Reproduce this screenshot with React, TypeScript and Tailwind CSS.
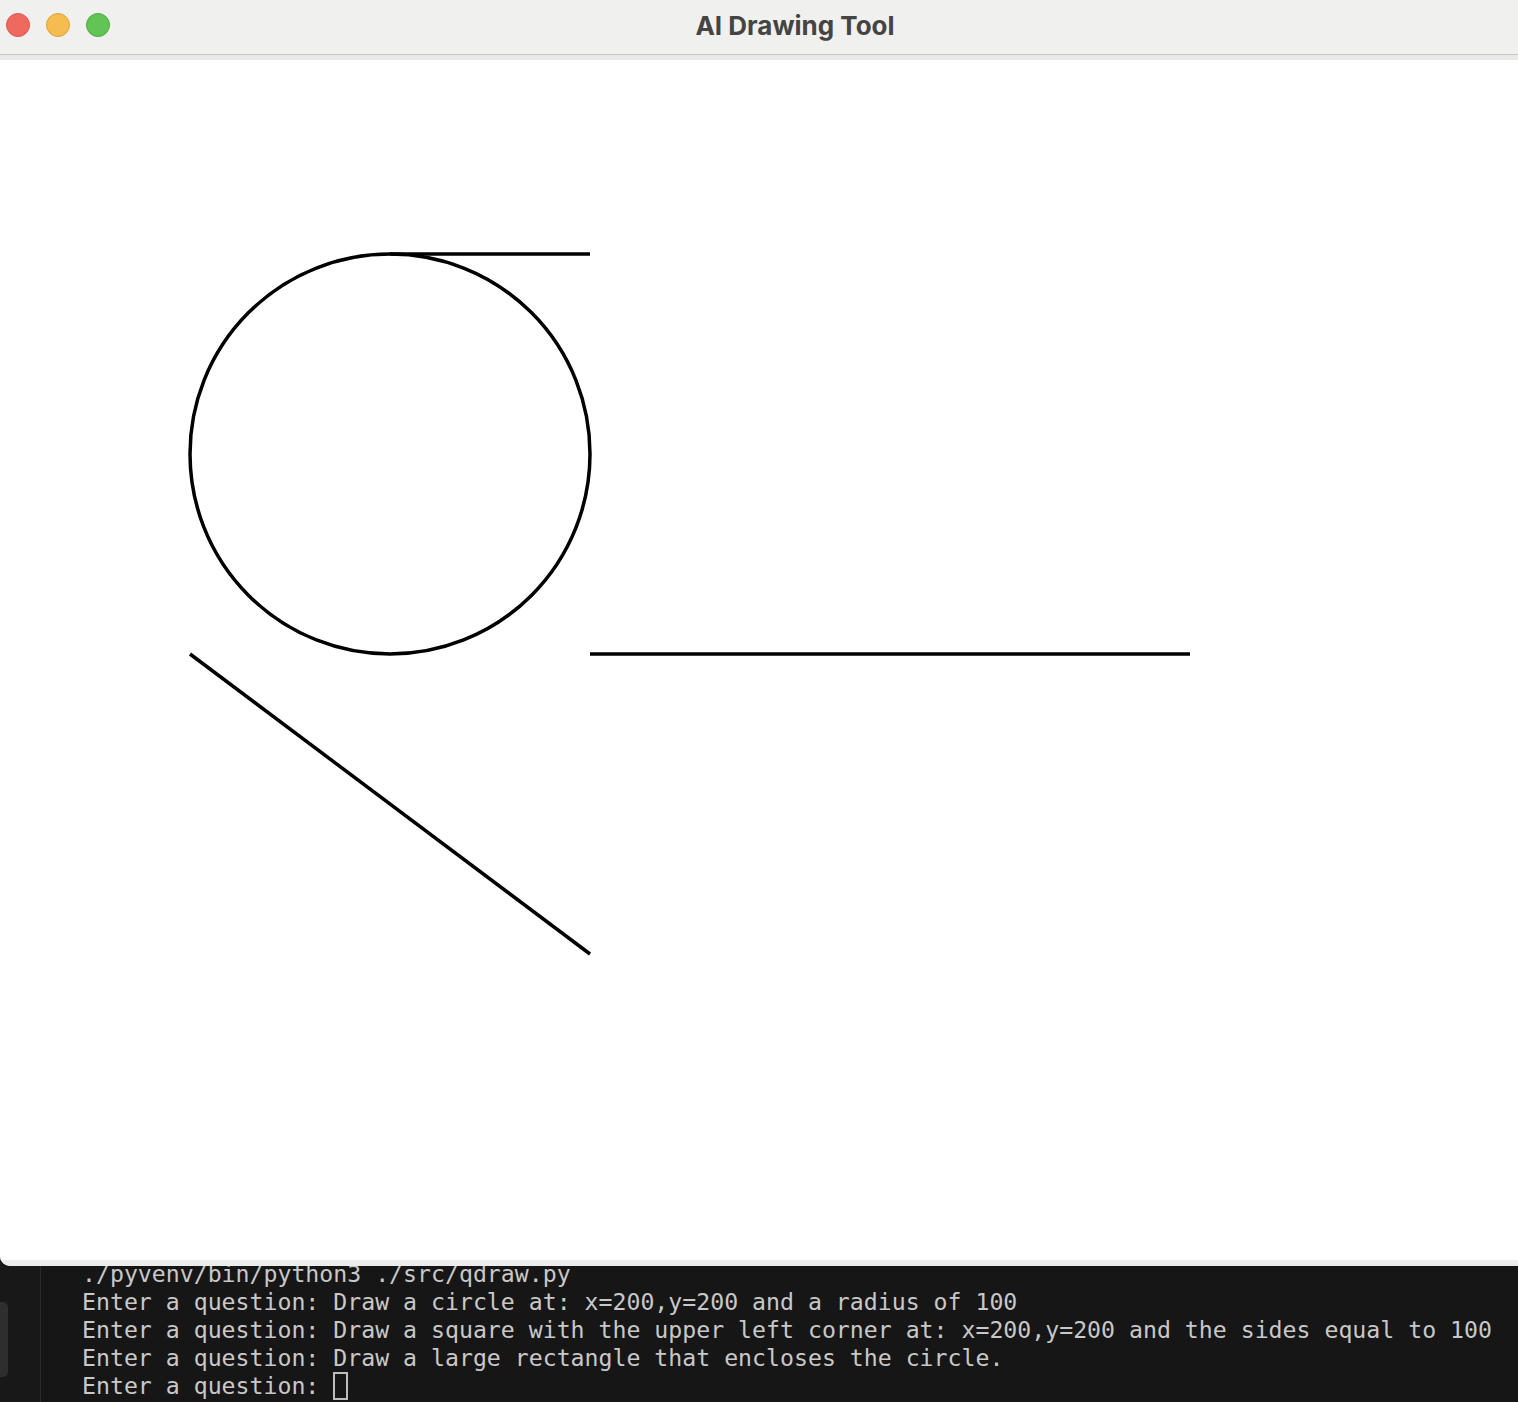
export default function App() {
  const lines = [
    './pyvenv/bin/python3 ./src/qdraw.py',
    'Enter a question: Draw a circle at: x=200,y=200 and a radius of 100',
    'Enter a question: Draw a square with the upper left corner at: x=200,y=200 and the sides equal to 100',
    'Enter a question: Draw a large rectangle that encloses the circle.',
  ];

  return (
    <div className="flex h-[1402px] w-[1518px] flex-col overflow-hidden bg-[#161616]">
      {/* drawing window */}
      <div className="flex flex-col overflow-hidden rounded-bl-[10px] bg-[#ececec]">
        <div className="relative flex h-[55px] items-center border-b border-[#c6c6c6] bg-[#f0f0ef] pb-[4px]">
          <div className="absolute left-[6px] top-[13px] flex gap-[16px]">
            <span className="h-[24px] w-[24px] rounded-full border border-[#d9574c] bg-[#ee6a5f]" />
            <span className="h-[24px] w-[24px] rounded-full border border-[#dea23a] bg-[#f5bd4f]" />
            <span className="h-[24px] w-[24px] rounded-full border border-[#4fa840] bg-[#61c454]" />
          </div>
          <div className="flex w-full justify-center pl-[72px] font-['Inter',sans-serif] text-[26px] font-bold text-[#444444]">
            AI Drawing Tool
          </div>
        </div>
        <div className="h-[5px] bg-[#e9e9e9]" />
        <div className="h-[1200px] bg-white">
          <svg width="1518" height="1200" viewBox="0 0 1518 1200" fill="none" stroke="#000" strokeWidth="3.5">
            <circle cx="390" cy="394" r="200" />
            <line x1="390" y1="194" x2="590" y2="194" />
            <line x1="590" y1="594" x2="1190" y2="594" />
            <line x1="190" y1="594" x2="590" y2="894" />
          </svg>
        </div>
        <div className="h-[6px] bg-[#ececec]" />
      </div>

      {/* terminal */}
      <div className="flex flex-1 overflow-hidden">
        <div className="relative w-[41px] shrink-0 border-r border-[#2a2a2a] bg-[#181818]">
          <div className="absolute left-0 top-[36px] h-[75px] w-[8px] rounded-r-[5px] bg-[#2e2e2e]" />
        </div>
        <div className="-mt-[6px] pl-[41px] font-['DejaVu_Sans_Mono',monospace] text-[23.2px] leading-[28px] whitespace-pre text-[#c8c8c8]">
          {lines.map((l) => (
            <div key={l}>{l}</div>
          ))}
          <div className="flex items-center">
            <span>Enter a question: </span>
            <span className="h-[28px] w-[15px] border-2 border-[#bdbdbd]" />
          </div>
        </div>
      </div>
    </div>
  );
}
